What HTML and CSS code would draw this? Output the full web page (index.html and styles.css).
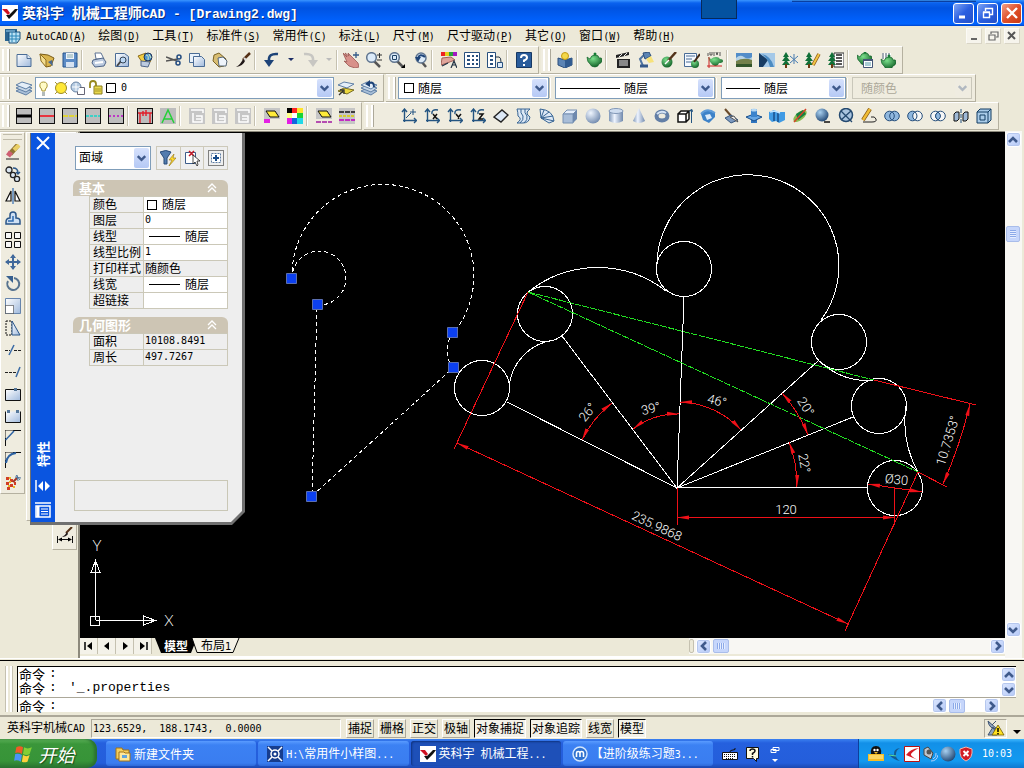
FILE: index.html
```html
<!DOCTYPE html>
<html lang="zh-CN">
<head>
<meta charset="utf-8">
<title>英科宇 机械工程师CAD - [Drawing2.dwg]</title>
<link rel="stylesheet" href="styles.css">
</head>
<body>
<svg class="defs" aria-hidden="true">
<defs>
<linearGradient id="blue" x1="0" y1="0" x2="1" y2="1"><stop offset="0" stop-color="#fff"/><stop offset="1" stop-color="#9fb9dc"/></linearGradient>
<linearGradient id="steel" x1="0" y1="0" x2="1" y2="0"><stop offset="0" stop-color="#7f97b8"/><stop offset=".4" stop-color="#eef4ff"/><stop offset="1" stop-color="#6f88ac"/></linearGradient>
<radialGradient id="ball" cx=".35" cy=".3" r=".8"><stop offset="0" stop-color="#f0f6ff"/><stop offset="1" stop-color="#6882a8"/></radialGradient>
<radialGradient id="dball" cx=".35" cy=".3" r=".8"><stop offset="0" stop-color="#a8d0f0"/><stop offset="1" stop-color="#173d6b"/></radialGradient>
<radialGradient id="green" cx=".4" cy=".3" r=".8"><stop offset="0" stop-color="#7be08c"/><stop offset="1" stop-color="#06521c"/></radialGradient>
<symbol id="page" viewBox="0 0 16 16"><path d="M1 2.500h10l4 4v8H1z" fill="url(#blue)" stroke="#4a6c96"/><path d="M11 2.500v4h4" fill="#dfe9f7" stroke="#4a6c96"/></symbol>
<symbol id="teapot" viewBox="0 0 16 16"><path d="M1 5l3 2q1-4 5-4t4 3q3-1 3 2t-3 4q-1 3-4 3-4 0-5-3Q1 10 1 5z" fill="url(#green)" stroke="#0a5a22" stroke-width=".6"/><circle cx="9" cy="2" r="1.500" fill="#157a35"/></symbol>
<symbol id="tree" viewBox="0 0 16 16"><path d="M5 0L2 5h2L1 9h3l-3 4h8L6 9h3L6 5h2z" fill="#107038"/><path d="M5 12v4" stroke="#6b3b12" stroke-width="2"/></symbol>
<symbol id="layers" viewBox="0 0 16 16"><path d="M0 11l6-3 10 3-6 4z" fill="#a9bfd8" stroke="#5f7fa5"/><path d="M0 8l6-3 10 3-6 4z" fill="#c7d7e8" stroke="#5f7fa5"/><path d="M0 5l6-3 10 3-6 4z" fill="#e4eef8" stroke="#5f7fa5"/></symbol>
<symbol id="lens" viewBox="0 0 16 16"><path d="M8 9l6 6" stroke="#555" stroke-width="2.500"/><circle cx="5.500" cy="5.500" r="4.800" fill="#dcebf9" stroke="#60758f" stroke-width="1.500"/></symbol>
<symbol id="axes" viewBox="0 0 16 16"><path d="M3.500 14V2M2 12.500h13M1 4l2.500-3L6 4M13 10l2.500 2.500L13 15" fill="none" stroke="#245582" stroke-width="1.400"/></symbol>
<symbol id="brush" viewBox="0 0 16 16"><path d="M15 1L8 8" stroke="#553016" stroke-width="2.500"/><path d="M8 7l2 2q-2 5-9 6 5-3 7-8z" fill="#201818"/><path d="M9 6l2 2" stroke="#ddd" stroke-width="2"/></symbol>
<symbol id="chev" viewBox="0 0 16 16"><path d="M4 6l4 4 4-4" fill="none" stroke="#3f5a8c" stroke-width="2.600"/></symbol>
<symbol id="ltype" viewBox="0 0 16 16"><rect x=".5" y=".5" width="15" height="15" fill="#bdbdbd" stroke="#111"/></symbol>
<symbol id="logo" viewBox="0 0 16 16"><path d="M0 0h16v16H0z" fill="#fff"/><path d="M0 4h5l3 4-2 2z" fill="#d01020"/><path d="M4 10l3 0 6-6h3l-3 4-6 6z" fill="#111"/></symbol>
<marker id="arr" viewBox="0 0 12 6" refX="12" refY="3" markerWidth="12" markerHeight="6" markerUnits="userSpaceOnUse" orient="auto-start-reverse"><path d="M0 1l12 2-12 2z" fill="#f01018"/></marker>
</defs>
</svg>
<div class="app">
<header class="titlebar">
  <svg class="i16"><use href="#logo"/></svg>
  <h1>英科宇<span class="t"> </span>机械工程师<span class="t">CAD - [Drawing2.dwg]</span></h1>
  <span class="overlay-chip"></span><span class="overlay-edge"></span>
  <div class="winbtns">
    <button aria-label="最小化"><svg viewBox="0 0 18 18"><path d="M4 13h6" stroke="#fff" stroke-width="3"/></svg></button>
    <button aria-label="还原"><svg viewBox="0 0 18 18"><path d="M6.500 7V4.500h7v6H11M4.500 8.500h6v5h-6zM6 4.500h8M4 8h7" fill="none" stroke="#fff" stroke-width="1.400"/></svg></button>
    <button class="close" aria-label="关闭"><svg viewBox="0 0 18 18"><path d="M4 4l10 10M14 4L4 14" stroke="#fff" stroke-width="2.400"/></svg></button>
  </div>
</header>
<nav class="menubar">
  <svg class="i16" viewBox="0 0 16 16"><path d="M0 1h12v12H0z" fill="#2a6590"/><path d="M4 4h11v7l-3 4H4z" fill="#bde3f5" stroke="#174d78"/><path d="M7 4v10M11 4v10M4 8h11M4 11h11" stroke="#2b86b8"/><path d="M1 3h9" stroke="#9dd4f0"/></svg>
  <a href="#m1"><span class="l">AutoCAD(<u>A</u>)</span></a>
  <a href="#m2">绘图<span class="l">(<u>D</u>)</span></a>
  <a href="#m3">工具<span class="l">(<u>T</u>)</span></a>
  <a href="#m4">标准件<span class="l">(<u>S</u>)</span></a>
  <a href="#m5">常用件<span class="l">(<u>C</u>)</span></a>
  <a href="#m6">标注<span class="l">(<u>L</u>)</span></a>
  <a href="#m7">尺寸<span class="l">(<u>M</u>)</span></a>
  <a href="#m8">尺寸驱动<span class="l">(<u>P</u>)</span></a>
  <a href="#m9">其它<span class="l">(<u>O</u>)</span></a>
  <a href="#m10">窗口<span class="l">(<u>W</u>)</span></a>
  <a href="#m11">帮助<span class="l">(<u>H</u>)</span></a>
  <div class="docbtns">
    <button aria-label="最小化文档"><svg viewBox="0 0 12 12"><path d="M3 9h6" stroke="#666" stroke-width="2"/></svg></button>
    <button aria-label="还原文档"><svg viewBox="0 0 12 12"><path d="M4 4V2h7v5H9M2 5h6v5H2zM4 2h7M2 5h6" fill="none" stroke="#666" stroke-width="1.200"/></svg></button>
    <button aria-label="关闭文档"><svg viewBox="0 0 12 12"><path d="M2 2l7 7M9 2L2 9" stroke="#555" stroke-width="2"/></svg></button>
  </div>
</nav>

<div class="row">
 <div class="bar">
  <i class="grip"></i>
  <button class="tb" aria-label="新建"><svg><use href="#page"/></svg></button>
  <button class="tb" aria-label="打开"><svg viewBox="0 0 16 16"><path d="M1 2l8 1 6 3-3 8-5 1z" fill="#d9b44c" stroke="#7a5c16"/><path d="M1 2l6 6v7L2 9z" fill="#f3dd8f" stroke="#8d6d20"/><path d="M9 10l5 4-1-6z" fill="#4a6a90"/></svg></button>
  <button class="tb" aria-label="保存"><svg viewBox="0 0 16 16"><path d="M1 1h14v14H1z" fill="#5b8bc5" stroke="#27548c"/><path d="M4 1h8v6H4z" fill="#eef4fb"/><path d="M4 10h8v5H4z" fill="#d5e2f1"/><path d="M5 3h6M5 5h6" stroke="#8aa"/></svg></button>
  <i class="sep"></i>
  <button class="tb" aria-label="打印"><svg viewBox="0 0 16 16"><path d="M4 1h6l3 6H5z" fill="#fff" stroke="#5d7293"/><path d="M2 8l10-2 3 4-2 4-9 1-3-4z" fill="#bccbe0" stroke="#4f6588"/><path d="M4 11l8-1" stroke="#fff" stroke-width="2"/></svg></button>
  <button class="tb" aria-label="打印预览"><svg viewBox="0 0 16 16"><path d="M1.500 1.500h9l4 3v10h-13z" fill="url(#blue)" stroke="#4a6c96"/><path d="M7 9l-4 5" stroke="#444" stroke-width="2"/><circle cx="9" cy="8" r="3" fill="#bcd8f5" stroke="#345"/></svg></button>
  <button class="tb" aria-label="发布"><svg viewBox="0 0 16 16"><path d="M1 4l8-3 5 8-7 4z" fill="#f2cf45" stroke="#8e6e1c"/><circle cx="11" cy="5" r="4" fill="#4d94cf" stroke="#235"/><path d="M9 3q3 0 2 5M12 2l2 4" stroke="#d8f0c0" fill="none"/><path d="M4 9l9 1-2 5-7-1z" fill="#bccbe0" stroke="#4f6588"/></svg></button>
  <i class="sep"></i>
  <button class="tb" aria-label="剪切"><svg viewBox="0 0 16 16"><path d="M0 5l11 4M0 9l12-2" stroke="#555" stroke-width="1.500"/><circle cx="13" cy="5" r="2" fill="none" stroke="#234c80" stroke-width="1.500"/><circle cx="12" cy="11" r="2" fill="none" stroke="#234c80" stroke-width="1.500"/></svg></button>
  <button class="tb" aria-label="复制"><svg viewBox="0 0 16 16"><path d="M.5 1.500h10v9H.5z" fill="#e9f2fb" stroke="#4a6c96"/><path d="M4.500 4.500h8l3 3v7h-11z" fill="url(#blue)" stroke="#4a6c96"/></svg></button>
  <button class="tb" aria-label="粘贴"><svg viewBox="0 0 16 16"><path d="M2 3l5-2 7 6-2 7-5 1-6-6z" fill="#d8bd72" stroke="#7c6425"/><path d="M6 6l5-1 4 4-1 5H7z" fill="#eef4fb" stroke="#567"/></svg></button>
  <button class="tb" aria-label="特性匹配"><svg><use href="#brush"/></svg></button>
  <i class="sep"></i>
  <button class="tb" aria-label="放弃"><svg viewBox="0 0 16 16"><path d="M14 2Q4 1 5 9" fill="none" stroke="#1d4378" stroke-width="2.500"/><path d="M0 8h10l-5 7z" fill="#1d4378"/></svg></button>
  <button class="tb drop" aria-label="放弃列表"><svg viewBox="0 0 6 16"><path d="M0 6h6L3 9z" fill="#1c2d66"/></svg></button>
  <button class="tb" aria-label="重做"><svg viewBox="0 0 16 16"><path d="M2 2q10-1 9 7" fill="none" stroke="#c7c6c2" stroke-width="2.500"/><path d="M6 8h10l-5 7z" fill="#c7c6c2"/></svg></button>
  <button class="tb drop" aria-label="重做列表"><svg viewBox="0 0 6 16"><path d="M0 6h6L3 9z" fill="#bbb"/></svg></button>
  <i class="sep tight"></i>
  <button class="tb" aria-label="平移"><svg viewBox="0 0 16 16"><path d="M0 1l4 4-2-4 4 3-1-3 5 5 5 5 1 4-4 1-6-2-5-5 3 1z" fill="#d8918a" stroke="#9a5550" stroke-width=".8"/><path d="M13 0v6M10 3h6" stroke="#345a88" stroke-width="1.300"/></svg></button>
  <button class="tb" aria-label="缩放"><svg viewBox="0 0 16 16"><use href="#lens"/><path d="M11 3h5M13.500 1v5M11 8h5" stroke="#333"/></svg></button>
  <button class="tb" aria-label="窗口缩放"><svg viewBox="0 0 16 16"><use href="#lens"/><path d="M3.500 3.500h4v4h-4z" fill="none" stroke="#246"/><path d="M16 12v4h-4z"/></svg></button>
  <button class="tb" aria-label="缩放上一个"><svg viewBox="0 0 16 16"><path d="M9 9l5 6" stroke="#555" stroke-width="2.500"/><circle cx="9" cy="6" r="5" fill="#dcebf9" stroke="#60758f" stroke-width="1.500"/><path d="M13 5Q8 1 6 6" fill="none" stroke="#1d4378" stroke-width="2"/><path d="M3 5h6l-3 5z" fill="#1d4378"/></svg></button>
  <i class="sep"></i>
  <button class="tb" aria-label="特性"><svg viewBox="0 0 16 16"><path d="M0 0h5v4H0z" fill="#e22"/><path d="M4 0h4v4H4z" fill="#e5d21c"/><path d="M8 0h4v4H8z" fill="#2aa43a"/><path d="M12 0h4v4h-4z" fill="#a31ac2"/><path d="M1 6l9-1 4 3-8 3-6 2z" fill="#e0a59b" stroke="#a26259"/><path d="M1 14l6-3M10 16l3-7 3 7M11 13h4" fill="none" stroke="#234" stroke-width="1.200"/></svg></button>
  <button class="tb" aria-label="设计中心"><svg viewBox="0 0 16 16"><path d="M.5.5h15v15H.5z" fill="#fff" stroke="#28507e"/><path d="M3 3h3v2H3zM3 7h3v2H3zM3 11h3v2H3zM8 3h2v2H8zM12 3h2v2h-2zM8 7h2v2H8zM12 7h2v2h-2zM8 11h2v2H8zM12 11h2v2h-2z" fill="#28507e"/></svg></button>
  <button class="tb" aria-label="工具选项板"><svg viewBox="0 0 16 16"><path d="M.5.5h8v15h-8z" fill="#fff" stroke="#28507e"/><path d="M3 3h3v2H3zM3 7h3v2H3zM3 11h3v2H3z" fill="#28507e"/><path d="M8 5h4q2 0 2 5" fill="none" stroke="#234"/><path d="M10.500 10.500h5v5h-5z" fill="#dcebf9" stroke="#28507e"/></svg></button>
  <i class="sep"></i>
  <button class="tb" aria-label="帮助"><svg viewBox="0 0 16 16"><path d="M.5.5h15v15H.5z" fill="#295c9b" stroke="#163863"/><path d="M5 6q0-3 3-3t3 2.500q0 2-3 3V10M8 12v2" fill="none" stroke="#fff" stroke-width="2"/></svg></button>
 </div>
 <div class="bar">
  <i class="grip"></i>
  <button class="tb" aria-label="隐藏"><svg viewBox="0 0 16 16"><path d="M1 6l7 2 7-2v7l-7 3-7-3z" fill="#5b84b4" stroke="#2c4f7c"/><path d="M8 8v8l7-3V6z" fill="#305b90"/><circle cx="8" cy="4" r="3.500" fill="#f3d84a" stroke="#c39a12"/></svg></button>
  <i class="sep"></i>
  <button class="tb" aria-label="渲染"><svg><use href="#teapot"/></svg></button>
  <i class="sep"></i>
  <button class="tb" aria-label="场景"><svg viewBox="0 0 16 16"><path d="M1 3l13-3v3L1 6zM2 7h13v9H2z" fill="#222"/><path d="M4 5l3-3M9 4l3-3M4 9h9M4 11h9M4 13h9" stroke="#eee"/></svg></button>
  <button class="tb" aria-label="光源"><svg viewBox="0 0 16 16"><path d="M5 14L2 7l5-5" fill="none" stroke="#4f74a2" stroke-width="2"/><path d="M2 14h8" stroke="#35598a" stroke-width="3"/><path d="M5 1l6-1 2 4-6 3z" fill="#5b84b4" stroke="#2c4f7c"/><path d="M8 7l5-3 3 6-5 1z" fill="#f7e27a"/></svg></button>
  <button class="tb" aria-label="材质"><svg viewBox="0 0 16 16"><circle cx="6" cy="10" r="5.500" fill="url(#green)"/><path d="M15 0L7 9" stroke="#53341b" stroke-width="2.500"/><path d="M8 8l-4 4" stroke="#fff" stroke-width="1.500"/></svg></button>
  <button class="tb" aria-label="材质库"><svg viewBox="0 0 16 16"><path d="M.5 1.500h12v13H.5z" fill="#f5f9ff" stroke="#4a6c96"/><path d="M2 4h9M2 7h6M2 10h6" stroke="#4a6c96"/><circle cx="11" cy="12" r="4" fill="url(#green)"/><path d="M16 2l-6 8" stroke="#442a18" stroke-width="2"/></svg></button>
  <button class="tb" aria-label="贴图"><svg viewBox="0 0 16 16"><path d="M1 5l3 2q2-2 5-2t4 2q3 0 3 2t-4 2q-1 3-4 3-3-1-4-3-2-2-3-6z" fill="url(#green)"/><path d="M2 5v11M0 14h15" stroke="#c22"/><path d="M1 1v3M3 0v3h2V0M7 0v4M9 0l1 3 1-3M13 0v4" stroke="#333" fill="none" stroke-width=".8"/></svg></button>
  <i class="sep"></i>
  <button class="tb" aria-label="背景"><svg viewBox="0 0 16 16"><path d="M0 1h16v14H0z" fill="#528dc9"/><path d="M0 6q4-4 8-1t8 0v4H0z" fill="#b8d3e5"/><path d="M0 9q8-4 16-1v7H0z" fill="#73804b"/><path d="M0 12h16v3H0z" fill="#33552b"/></svg></button>
  <button class="tb" aria-label="雾化"><svg viewBox="0 0 16 16"><path d="M0 1h16v14H0z" fill="#a5c9e8"/><path d="M0 1l9 7-5 7H0z" fill="#173c63"/><path d="M3 2q9 2 12 13h-4Q9 7 3 2z" fill="#4c8cc2"/></svg></button>
  <button class="tb" aria-label="新建配景"><svg viewBox="0 0 16 16"><use href="#tree" x="-1"/><path d="M12 2v10M8 4l8 7M16 4l-8 7" stroke="#477bb0"/></svg></button>
  <button class="tb" aria-label="编辑配景"><svg viewBox="0 0 16 16"><use href="#tree" x="-1"/><path d="M14 2L8 13" stroke="#8a5614" stroke-width="3.500"/><path d="M14 2L8 13" stroke="#f2c645" stroke-width="2"/></svg></button>
  <button class="tb" aria-label="配景库"><svg viewBox="0 0 16 16"><path d="M6 1h10v14H6z" fill="#fff" stroke="#333"/><path d="M8 3h6M8 6h6M8 9h6M8 12h6" stroke="#222" stroke-width="1.500"/><use href="#tree" x="-1"/></svg></button>
  <i class="sep"></i>
  <button class="tb" aria-label="渲染系统配置"><svg viewBox="0 0 16 16"><use href="#teapot" x="-1" y="-2"/><path d="M6.500 7.500h9v8h-9z" fill="#fff" stroke="#457"/><path d="M6 8h10" stroke="#457" stroke-width="2"/><path d="M8 11h6M8 13h6" stroke="#59a"/></svg></button>
  <button class="tb" aria-label="统计信息"><svg viewBox="0 0 16 16"><path d="M2 1h9v6H2z" fill="#fff"/><path d="M2 2h9M2 4h9M2 6h9" stroke="#456" stroke-dasharray="2 1"/><use href="#teapot" y="2"/></svg></button>
 </div>
</div>

<div class="row">
 <div class="bar">
  <i class="grip"></i>
  <button class="tb" aria-label="图层特性"><svg><use href="#layers"/></svg></button>
  <div class="combo layer">
   <svg class="state" viewBox="0 0 80 16"><path d="M5 11q0-2-2-4Q2 2 6.500 2T10 7q-2 2-2 4z" fill="#fffbc7" stroke="#a79532"/><path d="M5 13h3M5 15h3" stroke="#677"/><circle cx="24" cy="8" r="5.500" fill="#ffe836" stroke="#9c8b25"/><path d="M18 2l2 2M30 2l-2 2M18 14l2-2M30 14l-2-2" stroke="#a79532"/><circle cx="39" cy="7" r="5" fill="#b5cbe2" stroke="#6d87a6"/><path d="M39 3v8M35 7h8" stroke="#fff"/><path d="M42.500 7.500h5v7h-7v-3" fill="#fff" stroke="#667"/><path d="M53 8V4q0-3 3-3t3 3v3" fill="none" stroke="#97881f" stroke-width="1.800"/><path d="M57 6h8v8h-8z" fill="#e9d94d" stroke="#8b7e20"/><path d="M58 9h6M58 11h6" stroke="#a7982e"/><path d="M69.500 3.500h9v9h-9z" fill="#fff" stroke="#000"/></svg>
   <select class="mono" aria-label="图层"><option>0</option></select><svg class="arrow"><use href="#chev"/></svg>
  </div>
  <button class="tb" aria-label="置为当前"><svg viewBox="0 0 16 16"><path d="M0 11l6-3 10 2-7 4z" fill="#edd83f" stroke="#756b21"/><path d="M0 5l6-3 10 2-7 4z" fill="#e4eef8" stroke="#5f7fa5"/><path d="M1 15l4-4M2 10h4v4" fill="none" stroke="#333" stroke-width="1.300"/></svg></button>
  <button class="tb" aria-label="上一个图层"><svg viewBox="0 0 16 16"><use href="#layers"/><path d="M13 7Q13 1 8 3" fill="none" stroke="#1d4378" stroke-width="2"/><path d="M4 4l5-4v7z" fill="#1d4378"/></svg></button>
 </div>
 <div class="bar props">
  <i class="grip"></i>
  <div class="combo color"><i class="swatch"></i><select aria-label="颜色"><option>随层</option></select><svg class="arrow"><use href="#chev"/></svg></div>
  <i class="sep"></i>
  <div class="combo ltype"><i class="rule"></i><select aria-label="线型"><option>随层</option></select><svg class="arrow"><use href="#chev"/></svg></div>
  <i class="sep"></i>
  <div class="combo lweight"><i class="rule"></i><select aria-label="线宽"><option>随层</option></select><svg class="arrow"><use href="#chev"/></svg></div>
  <i class="sep"></i>
  <div class="combo pstyle off"><select aria-label="打印样式" disabled><option>随颜色</option></select><svg class="arrow"><use href="#chev"/></svg></div>
 </div>
</div>

<div class="row">
 <div class="bar">
  <i class="grip"></i>
  <button class="tb" aria-label="粗实线"><svg viewBox="0 0 16 16"><use href="#ltype"/><path d="M1 8h14" stroke="#000" stroke-width="3"/></svg></button>
  <button class="tb" aria-label="细实线"><svg viewBox="0 0 16 16"><use href="#ltype"/><path d="M1 8h14" stroke="#e8353f" stroke-width="2"/></svg></button>
  <button class="tb" aria-label="中心线"><svg viewBox="0 0 16 16"><use href="#ltype"/><path d="M1 8h14" stroke="#ded33a" stroke-width="2" stroke-dasharray="5 1"/></svg></button>
  <button class="tb" aria-label="虚线"><svg viewBox="0 0 16 16"><use href="#ltype"/><path d="M1 8h14" stroke="#3ed0c6" stroke-width="2" stroke-dasharray="3 1"/></svg></button>
  <button class="tb" aria-label="双点画线"><svg viewBox="0 0 16 16"><use href="#ltype"/><path d="M1 8h14" stroke="#bd38c4" stroke-width="2" stroke-dasharray="2 2"/></svg></button>
  <i class="sep"></i>
  <button class="tb" aria-label="尺寸层"><svg viewBox="0 0 16 16"><use href="#ltype"/><path d="M3 15V5h10v10M6 8V3M9 8V2M1 5h3M12 5h3" fill="none" stroke="#e01d28" stroke-width="1.400"/></svg></button>
  <button class="tb" aria-label="文字层"><svg viewBox="0 0 16 16"><path d="M0 0h16v16H0z" fill="#bdbdbd"/><path d="M2 15L8 2l6 13M4 11h8" fill="none" stroke="#25cf38" stroke-width="1.500"/></svg></button>
  <i class="sep"></i>
  <button class="tb" aria-label="图层一"><svg viewBox="0 0 16 16"><path d="M0 0h16v16H0z" fill="#c6c6c6"/><path d="M2 2h12v3M4 5v9h9V8H7M7 11h5" fill="none" stroke="#fff" stroke-width="1.500"/></svg></button>
  <button class="tb" aria-label="图层二"><svg viewBox="0 0 16 16"><path d="M0 0h16v16H0z" fill="#c6c6c6"/><path d="M2 2h12v3M4 5v9h9V8H7M7 11h5" fill="none" stroke="#fff" stroke-width="1.500"/></svg></button>
  <button class="tb" aria-label="图层三"><svg viewBox="0 0 16 16"><path d="M0 0h16v16H0z" fill="#c6c6c6"/><path d="M2 2h12v3M4 5v9h9V8H7M7 11h5" fill="none" stroke="#fff" stroke-width="1.500"/></svg></button>
  <i class="sep"></i>
  <button class="tb" aria-label="改图层"><svg viewBox="0 0 16 16"><path d="M0 0h16v11H0z" fill="#c6c6c6"/><path d="M2 3h9l4 6H6z" fill="#ffeb3a" stroke="#111"/><path d="M0 11h6v4H0z" fill="#e422e4"/></svg></button>
  <button class="tb" aria-label="改颜色"><svg viewBox="0 0 16 16"><path d="M0 0h5v5H0z" fill="#000"/><path d="M5 0h5v5H5z" fill="#f22"/><path d="M10 0h6v5h-6z" fill="#ffe32b"/><path d="M0 5h5v5H0z" fill="#ff8"/><path d="M5 5h5v5H5z" fill="#fff"/><path d="M10 5h6v5h-6z" fill="#1bd335"/><path d="M0 10h5v6H0z" fill="#e31ee3"/><path d="M5 10h5v6H5z" fill="#16d"/><path d="M10 10h6v6h-6z" fill="#20d8e8"/></svg></button>
  <i class="sep"></i>
  <button class="tb" aria-label="层线型"><svg viewBox="0 0 16 16"><path d="M0 0h16v11H0z" fill="#c6c6c6"/><path d="M2 3h9l4 6H6z" fill="#ffeb3a" stroke="#111"/><path d="M0 14h16" stroke="#a31aa3" stroke-width="1.500" stroke-dasharray="5 1"/></svg></button>
  <button class="tb" aria-label="改线型"><svg viewBox="0 0 16 16"><path d="M0 0h16v16H0z" fill="#c6c6c6"/><path d="M0 4h16" stroke="#111" stroke-width="1.500" stroke-dasharray="5 1"/><path d="M0 8h16" stroke="#d8cc2e" stroke-width="2" stroke-dasharray="3 1"/><path d="M0 12h16" stroke="#c32cc3" stroke-width="2" stroke-dasharray="5 1"/></svg></button>
 </div>
 <div class="bar solids">
  <i class="grip"></i>
  <button class="tb" aria-label="UCS 原点"><svg viewBox="0 0 16 16"><use href="#axes"/><path d="M5 10l5-5M12 1v6M9 4h6" stroke="#245582"/></svg></button>
  <button class="tb" aria-label="绕 X 轴"><svg viewBox="0 0 16 16"><use href="#axes"/><path d="M14 2Q7 1 8 6" fill="none" stroke="#245582" stroke-width="1.500"/><path d="M9 6l4 5M13 6l-4 5" stroke="#111" stroke-width="1.500"/></svg></button>
  <button class="tb" aria-label="绕 Y 轴"><svg viewBox="0 0 16 16"><use href="#axes"/><path d="M14 2Q7 1 8 6" fill="none" stroke="#245582" stroke-width="1.500"/><path d="M9 6l2.500 3L14 6M11.500 8v3" fill="none" stroke="#111" stroke-width="1.500"/></svg></button>
  <button class="tb" aria-label="绕 Z 轴"><svg viewBox="0 0 16 16"><use href="#axes"/><path d="M14 2Q7 1 8 6" fill="none" stroke="#245582" stroke-width="1.500"/><path d="M9 6h4l-4 5h4" fill="none" stroke="#111" stroke-width="1.500"/></svg></button>
  <button class="tb" aria-label="面"><svg viewBox="0 0 16 16"><path d="M1 9l8-7 6 5-7 7z" fill="#dce8f5" stroke="#222" stroke-width="1.400"/></svg></button>
  <button class="tb" aria-label="直纹曲面"><svg viewBox="0 0 16 16"><path d="M1 1h13q-6 4 0 8-1 6-7 6H1q6-4 1-7 0-4-1-7z" fill="#dce8f5" stroke="#386594"/><path d="M5 1q-1 4 2 7 1 4-3 7M9 1q-1 4 2 7 1 4-3 7" fill="none" stroke="#386594"/></svg></button>
  <button class="tb" aria-label="边界曲面"><svg viewBox="0 0 16 16"><path d="M1 1q13 1 14 12l-5 2-8-5z" fill="#dce8f5" stroke="#386594"/><path d="M2 10l3-8M2 10l8-6M2 10l12-2M2 10l13 3" stroke="#386594"/></svg></button>
  <button class="tb" aria-label="长方体"><svg viewBox="0 0 16 16"><path d="M1 6l4-4h10l-4 4z" fill="#e5eefb" stroke="#7790b2"/><path d="M1 6h10v9H1z" fill="#a8bdd8" stroke="#7790b2"/><path d="M11 6l4-4v9l-4 4z" fill="#6e89ae"/></svg></button>
  <button class="tb" aria-label="球体"><svg viewBox="0 0 16 16"><circle cx="8" cy="8" r="7.500" fill="url(#ball)"/></svg></button>
  <button class="tb" aria-label="圆柱体"><svg viewBox="0 0 16 16"><path d="M1 3v10q7 4 14 0V3z" fill="url(#steel)"/><ellipse cx="8" cy="3" rx="7" ry="2.500" fill="#cfddf0" stroke="#8298b8"/></svg></button>
  <button class="tb" aria-label="圆锥体"><svg viewBox="0 0 16 16"><path d="M8 0L2 13q6 4 12 0z" fill="url(#steel)"/></svg></button>
  <button class="tb" aria-label="圆环体"><svg viewBox="0 0 16 16"><ellipse cx="8" cy="8" rx="5.500" ry="4.500" fill="none" stroke="#637fa6" stroke-width="4"/><path d="M3 6q4-4 9-1" fill="none" stroke="#d5e4f6" stroke-width="2"/></svg></button>
  <button class="tb" aria-label="拉伸"><svg viewBox="0 0 16 16"><path d="M1 6h8v8H1zM1 6l3-3h8L9 6M12 3v8l-3 3" fill="#fff" stroke="#111" stroke-width="1.500"/><path d="M14.500 15V2M12.500 4l2-3 1.500 3" stroke="#245582" fill="none"/></svg></button>
  <button class="tb" aria-label="旋转实体"><svg viewBox="0 0 16 16"><path d="M1 6l6-4 8 3v4l-6 6-6-3z" fill="#3d82c8"/><path d="M5 7l5-1 2 4-5 2z" fill="#dcebfa"/><path d="M1 6q6-7 14-1" fill="none" stroke="#5f9bd8" stroke-width="2"/></svg></button>
  <button class="tb" aria-label="剖切"><svg viewBox="0 0 16 16"><path d="M2 1l7 8" stroke="#6a4b2b" stroke-width="2"/><path d="M2 10l6-3 7 5-7 3z" fill="#7d9abf" stroke="#36567e"/><path d="M7 9l4-1 4 6z" fill="#eee" stroke="#555"/></svg></button>
  <button class="tb" aria-label="切割"><svg viewBox="0 0 16 16"><path d="M5 1h6v14H5z" fill="#3277c0"/><path d="M0 9l8-3 8 3-8 4z" fill="#65a6e4" stroke="#194e8a"/><path d="M5 2h6v7H5z" fill="#3c84cc"/><ellipse cx="8" cy="2" rx="3" ry="1.500" fill="#b5d8f4"/></svg></button>
  <button class="tb" aria-label="干涉"><svg viewBox="0 0 16 16"><path d="M0 4l5-2 4 2 7 0v8l-6 3-3-2-4 1-3-3z" fill="#409be4"/><path d="M5 3v10M9 5v9" stroke="#174f8a" stroke-width="1.500"/><path d="M1 4l5-1 5 2" stroke="#c0e4ff" stroke-width="1.500" fill="none"/></svg></button>
  <button class="tb" aria-label="三维旋转"><svg viewBox="0 0 16 16"><ellipse cx="8" cy="8" rx="8" ry="4" transform="rotate(-40 8 8)" fill="#88bd53"/><path d="M4 6l7-4 3 4-8 6z" fill="#158142"/><path d="M2 14L14 1" stroke="#d6432a" stroke-width="1.500"/></svg></button>
  <button class="tb" aria-label="着色"><svg viewBox="0 0 16 16"><circle cx="7" cy="7" r="6.500" fill="url(#dball)"/><path d="M9 14h6" stroke="#111" stroke-width="1.500"/></svg></button>
  <button class="tb" aria-label="消隐"><svg viewBox="0 0 16 16"><circle cx="8" cy="7" r="6.500" fill="#a9c4df" stroke="#24496f" stroke-width="1.500"/><path d="M3 3l11 11M13 3L3 12" stroke="#24496f" stroke-width="1.300"/></svg></button>
  <button class="tb" aria-label="编辑实体"><svg viewBox="0 0 16 16"><path d="M9 1L2 12" stroke="#81520d" stroke-width="4"/><path d="M9 1L2 12" stroke="#f0bd35" stroke-width="2.500"/><path d="M2 14h9q5 0 4-3-1-3-5-2" fill="none" stroke="#222"/></svg></button>
  <button class="tb" aria-label="并集"><svg viewBox="0 0 16 16"><circle cx="5.500" cy="8" r="4.800" fill="#8fb7de"/><circle cx="10.500" cy="8" r="4.800" fill="#8fb7de"/><g fill="none" stroke="#264e7a"><circle cx="5.500" cy="8" r="4.800"/><circle cx="10.500" cy="8" r="4.800"/></g></svg></button>
  <button class="tb" aria-label="差集"><svg viewBox="0 0 16 16"><circle cx="5.500" cy="8" r="4.800" fill="#8fb7de" stroke="#264e7a"/><circle cx="10.500" cy="8" r="4.800" fill="#f6f6f6" stroke="#264e7a"/><path d="M8 4q4 4 0 8" fill="none" stroke="#264e7a"/></svg></button>
  <button class="tb" aria-label="交集"><svg viewBox="0 0 16 16"><g fill="#f6f6f6" stroke="#264e7a"><circle cx="5.500" cy="8" r="4.800"/><circle cx="10.500" cy="8" r="4.800"/></g><path d="M8 4q5 4 0 8-5-4 0-8z" fill="#8fb7de" stroke="#264e7a"/></svg></button>
  <button class="tb" aria-label="三维镜像"><svg viewBox="0 0 16 16"><path d="M1 6l2-2h3v7l-2 2H1zM10 6l2-2h3v7l-2 2h-3z" fill="#9fb9d6" stroke="#111"/><path d="M8 1v15" stroke="#245582" stroke-dasharray="4 1"/></svg></button>
  <button class="tb" aria-label="抽壳"><svg viewBox="0 0 16 16"><path d="M1 4l3-3h11v11l-3 3H1z" fill="#a9cbe8" stroke="#123c62"/><path d="M1 4h11v11M12 4l3-3M4 7h5v5H4z" fill="none" stroke="#123c62"/></svg></button>
 </div>
</div>

<main class="work">
 <aside class="dock">
  <div class="vbar first">
   <i class="vgrip"></i>
   <button class="vb" aria-label="删除"><svg viewBox="0 0 16 16"><path d="M1 15h13" stroke="#222"/><path d="M13 1L5 10" stroke="#8f7435" stroke-width="5"/><path d="M14 1L9 6" stroke="#e9cf65" stroke-width="4"/><path d="M6 8l-3 4" stroke="#cf5f73" stroke-width="5"/></svg></button>
   <button class="vb" aria-label="复制对象"><svg viewBox="0 0 16 16"><g fill="#d9e5f1" stroke="#222" stroke-width="1.300"><circle cx="4" cy="4" r="3"/><circle cx="8" cy="9" r="2.600"/><circle cx="12" cy="13" r="2.600"/></g><path d="M8 2q5 0 5 5M11 6l2 2 2-2" fill="none" stroke="#2b5689" stroke-width="1.400"/></svg></button>
   <button class="vb" aria-label="镜像"><svg viewBox="0 0 16 16"><path d="M6 3v10H1zM10 3v10h5z" fill="#fff" stroke="#111" stroke-width="1.200"/><path d="M8 0v16" stroke="#2d6ab1" stroke-width="1.200"/></svg></button>
   <button class="vb" aria-label="偏移"><svg viewBox="0 0 16 16"><path d="M1 14h14v-3q0-3-4-3V5q0-3-3-3T5 5v3q-4 0-4 4z" fill="#cfe0f3" stroke="#2b5689" stroke-width="1.500"/><path d="M3 11h5V6" fill="none" stroke="#2d6ab1" stroke-width="1.500"/></svg></button>
   <button class="vb" aria-label="阵列"><svg viewBox="0 0 16 16"><path d="M.500.500h6v6h-6zM9.500.500h6v6h-6zM.500 9.500h6v6h-6zM9.500 9.500h6v6h-6z" fill="#f7f7f7" stroke="#111"/></svg></button>
   <button class="vb" aria-label="移动"><svg viewBox="0 0 16 16"><path d="M8 1v14M1 8h14" stroke="#41699b" stroke-width="2"/><path d="M8 0l3 4H5zM8 16l3-4H5zM0 8l4-3v6zM16 8l-4-3v6z" fill="#41699b"/></svg></button>
   <button class="vb" aria-label="旋转"><svg viewBox="0 0 16 16"><path d="M3 5a6 6 0 1 0 6-3" fill="none" stroke="#587490" stroke-width="2"/><path d="M1 0h7v7z" fill="#37608f"/></svg></button>
   <button class="vb" aria-label="缩放对象"><svg viewBox="0 0 16 16"><path d="M.5.5h15v15H.5z" fill="url(#blue)" stroke="#6685ad"/><path d="M.5 7.500h8v8h-8z" fill="#fff" stroke="#222" stroke-dasharray="1 1"/></svg></button>
   <button class="vb" aria-label="拉伸对象"><svg viewBox="0 0 16 16"><path d="M1 1h6v14H1z" fill="none" stroke="#111" stroke-dasharray="2 1"/><path d="M7 1l8 14H7z" fill="url(#blue)" stroke="#2b5689"/></svg></button>
   <button class="vb" aria-label="修剪"><svg viewBox="0 0 16 16"><path d="M0 8.500h5M9 8.500h7" stroke="#222" stroke-dasharray="3 1"/><path d="M4 13l5-10" stroke="#3b6ba5" stroke-width="1.500"/></svg></button>
   <button class="vb" aria-label="延伸"><svg viewBox="0 0 16 16"><path d="M0 8.500h11" stroke="#222" stroke-dasharray="3 1"/><path d="M11 13l4-10" stroke="#3b6ba5" stroke-width="1.500"/></svg></button>
   <button class="vb" aria-label="打断于点"><svg viewBox="0 0 16 16"><path d="M.500 3.500h15v11H.500z" fill="url(#blue)" stroke="#111"/><path d="M9 2h3v3H9z" fill="#55779a"/></svg></button>
   <button class="vb" aria-label="打断"><svg viewBox="0 0 16 16"><path d="M.500 3.500v11h15v-11" fill="url(#blue)" stroke="#111"/><path d="M2 2h3v3H2zM11 2h3v3h-3z" fill="#55779a"/></svg></button>
   <button class="vb" aria-label="倒角"><svg viewBox="0 0 16 16"><path d="M.500.500v8M.500.500h8" stroke="#111" stroke-dasharray="1 1"/><path d="M8 .500h8M.500 8v8" stroke="#111"/><path d="M.500 10L9 1" fill="none" stroke="#2d62a3" stroke-width="1.500"/></svg></button>
   <button class="vb" aria-label="圆角"><svg viewBox="0 0 16 16"><path d="M.500.500v8M.500.500h8" stroke="#111" stroke-dasharray="1 1"/><path d="M8 .500h8M.500 8v8" stroke="#111"/><path d="M1 11Q2 2 11 1" fill="none" stroke="#2d62a3" stroke-width="2"/></svg></button>
   <button class="vb" aria-label="分解"><svg viewBox="0 0 16 16"><path d="M1 3h3v3H1zM5 5h3v3H5zM1 8h3v3H1zM5 10h3v3H5zM9 8h2v3H9zM2 13h3v3H2z" fill="#d23e25"/><path d="M4 3h2v2H4zM4 7h2v2H4zM8 12h2v2H8zM3 11h2v2H3z" fill="#e5b82c"/><path d="M8 8l4-4" stroke="#a33420" stroke-width="2"/><path d="M12 1l1 6M10 3l6 1M11 1l4 5" stroke="#50749b"/></svg></button>
  </div>
  <div class="vbar second"></div>
  <div class="vbar third"><button class="vb" aria-label="标注样式"><svg viewBox="0 0 16 16"><path d="M15 0L9 6" stroke="#553016" stroke-width="2"/><path d="M10 5l1 2q-2 3-6 3 3-1 5-5z" fill="#201818"/><path d="M.500 9v7M15.500 9v7M2 12.500h12" stroke="#111"/><path d="M1 12.500l4-2v4zM15 12.500l-4-2v4z"/></svg></button></div>
 </aside>
 <section class="view">
  <svg class="canvas" viewBox="80 132 925 505" preserveAspectRatio="xMinYMin meet" role="img" aria-label="图形">
   <g fill="none" stroke="#fff" shape-rendering="crispEdges">
    <g stroke-dasharray="4 3">
     <path d="M292 278A91 91 0 1 1 455 331A28 28 0 0 0 453 368L312 496L317 305A27 27 0 1 0 292 278"/>
    </g>
    <circle cx="482" cy="388" r="27.500"/><circle cx="545" cy="314" r="27.500"/><circle cx="684" cy="269" r="27.500"/><circle cx="839" cy="342" r="27.500"/><circle cx="879" cy="406" r="27.500"/><circle cx="895" cy="488" r="27.500"/>
    <path d="M657 270A91 91 0 1 1 821 320M527 293A111 111 0 0 1 666 291M509 388A52 52 0 0 1 554 340M820 361A64 64 0 0 0 873 380M906 406A104 104 0 0 0 918 472"/>
    <path d="M507 402L677 488L562 336M684 297L677 488L818 361M853 417L677 488M677 487.500H867"/>
    <path d="M90.500 616.500h9v9h-9zM95.500 620V561M95.500 620.500H155M91 572.500h9l-4.500-12zM143.500 616v9l12-4.500z"/>
   </g>
   <g fill="none" stroke="#22e022" stroke-dasharray="7 1" shape-rendering="crispEdges"><path d="M528 292L874 380M528 292L918 472"/></g>
   <g fill="none" stroke="#f01018" shape-rendering="crispEdges">
    <path d="M528 292L454 449M874 380L976 405M918 472L947 487M918 472L845 631M677.500 488V525M894.500 488V525"/>
    <g marker-start="url(#arr)" marker-end="url(#arr)">
     <path d="M457 443L848 624"/><path d="M677 517.500H895"/><path d="M868 484L922 492"/>
     <path d="M970 404A455 455 0 0 1 943 484"/>
     <path d="M582 440A106 106 0 0 1 612 403"/><path d="M633 429A74 74 0 0 1 679 414"/><path d="M680 402A86 86 0 0 1 741 430"/><path d="M782 393A141 141 0 0 1 808 435"/><path d="M789 442A120 120 0 0 1 797 487"/>
    </g>
   </g>
   <g class="dimtext" text-anchor="middle">
    <text transform="translate(591 415) rotate(-52)">26°</text>
    <text transform="translate(652 413) rotate(-14)">39°</text>
    <text transform="translate(716 405) rotate(14)">46°</text>
    <text transform="translate(802 409) rotate(58)">20°</text>
    <text transform="translate(800 464) rotate(80)">22°</text>
    <text x="786" y="514">120</text>
    <text transform="translate(896 484) rotate(6)">Ø30</text>
    <text transform="translate(655 530) rotate(25)">235.9868</text>
    <text transform="translate(952 442) rotate(-73)">10.7353°</text>
   </g>
   <g class="ucs" text-anchor="middle"><text x="97" y="551">Y</text><text x="169" y="626">X</text></g>
   <g fill="#0c40f0" stroke="#5b6fb0"><path d="M286.500 273.500h10v10h-10zM312.500 299.500h10v10h-10zM447.500 327.500h10v10h-10zM448.500 362.500h10v10h-10zM306.500 491.500h10v10h-10z"/></g>
  </svg>
  <div class="tabs">
   <button class="nav" aria-label="第一个"><svg viewBox="0 0 10 10"><path d="M1 1v8" stroke="#000" stroke-width="1.500"/><path d="M8 1v8L3 5z"/></svg></button>
   <button class="nav" aria-label="上一个"><svg viewBox="0 0 10 10"><path d="M7 1v8L2 5z"/></svg></button>
   <button class="nav" aria-label="下一个"><svg viewBox="0 0 10 10"><path d="M3 1v8l5-4z"/></svg></button>
   <button class="nav" aria-label="最后一个"><svg viewBox="0 0 10 10"><path d="M2 1v8l5-4z"/><path d="M9 1v8" stroke="#000" stroke-width="1.500"/></svg></button>
   <button class="tab on"><svg viewBox="0 0 42 15" preserveAspectRatio="none"><path d="M0 0h42l-6 15H6z" fill="#000"/></svg><span>模型</span></button>
   <button class="tab"><svg viewBox="0 0 48 15" preserveAspectRatio="none"><path d="M0 0l5 14.500h36L47 0" fill="#f4f1e6" stroke="#000"/></svg><span>布局<span class="l">1</span></span></button>
   <div class="hscroll"><i class="split"></i><button class="sb" aria-label="向左"><svg><use href="#chev" transform="rotate(90 8 8)"/></svg></button><i class="thumb"></i><button class="sb end" aria-label="向右"><svg><use href="#chev" transform="rotate(-90 8 8)"/></svg></button></div>
  </div>
 </section>
 <div class="vscroll"><button class="sb" aria-label="向上"><svg><use href="#chev" transform="rotate(180 8 8)"/></svg></button><i class="thumb v"></i><button class="sb bottom" aria-label="向下"><svg><use href="#chev"/></svg></button></div>

 <section class="palette" aria-label="特性">
  <div class="palette-in">
   <div class="pbar">
    <button aria-label="关闭特性"><svg viewBox="0 0 16 16"><path d="M2 2l12 12M14 2L2 14" stroke="#fff" stroke-width="2"/></svg></button>
    <h2>特性</h2>
    <button aria-label="自动隐藏"><svg viewBox="0 0 16 16"><path d="M1 2v12" stroke="#fff" stroke-width="1.500"/><path d="M3 8l5-5v10zM10 3l5 5-5 5z" fill="#fff"/></svg></button>
    <button aria-label="特性菜单"><svg viewBox="0 0 16 16"><path d="M0 1h16M1 4h14v11H1z" fill="none" stroke="#fff" stroke-width="1.500"/><path d="M3 4v11" stroke="#fff" stroke-width="3"/><path d="M6 7h7M6 9.500h7M6 12h7" stroke="#fff"/></svg></button>
   </div>
   <div class="pbody">
    <div class="ptop">
     <div class="combo obj"><select aria-label="对象类型"><option>面域</option></select><svg class="arrow"><use href="#chev"/></svg></div>
     <div class="pbtns">
      <button aria-label="快速选择"><svg viewBox="0 0 16 16"><path d="M0 2q6-3 11 0L7 8v6H4V8z" fill="#537cae" stroke="#274a78"/><path d="M14 4l-5 6h3l-3 6 7-8h-3z" fill="#ffda2e" stroke="#93730f" stroke-width=".6"/></svg></button>
      <button aria-label="选择对象"><svg viewBox="0 0 16 16"><path d="M1.500 2.500h10v11h-10z" fill="#fff" stroke="#3c5c8a"/><path d="M5 1l5 5M10 1L5 6" stroke="#c21826" stroke-width="1.500"/><path d="M9 5v9l2-2 2 4 1-1-1-4h3z" fill="#fff" stroke="#222" stroke-width=".8"/></svg></button>
      <button aria-label="切换 PICKADD"><svg viewBox="0 0 16 16"><path d="M.500.500h15v15H.500z" fill="none" stroke="#111" stroke-dasharray="1 1"/><path d="M3.500 3.500h9v9h-9z" fill="#fff" stroke="#5c7ba2" stroke-dasharray="2 1"/><path d="M8 5v6M5 8h6" stroke="#174b8a" stroke-width="2"/></svg></button>
     </div>
    </div>
    <h3><span>基本</span><svg viewBox="0 0 10 10"><path d="M1 5l4-4 4 4M1 9l4-4 4 4" fill="none" stroke="#fff" stroke-width="1.300"/></svg></h3>
    <table>
     <tr><th scope="row">颜色</th><td><i class="swatch"></i>随层</td></tr>
     <tr><th scope="row">图层</th><td class="mono">0</td></tr>
     <tr><th scope="row">线型</th><td><i class="rule"></i>随层</td></tr>
     <tr><th scope="row">线型比例</th><td class="mono">1</td></tr>
     <tr><th scope="row">打印样式</th><td class="ro">随颜色</td></tr>
     <tr><th scope="row">线宽</th><td><i class="rule"></i>随层</td></tr>
     <tr><th scope="row">超链接</th><td></td></tr>
    </table>
    <h3><span>几何图形</span><svg viewBox="0 0 10 10"><path d="M1 5l4-4 4 4M1 9l4-4 4 4" fill="none" stroke="#fff" stroke-width="1.300"/></svg></h3>
    <table>
     <tr><th scope="row">面积</th><td class="mono ro">10108.8491</td></tr>
     <tr><th scope="row">周长</th><td class="mono ro">497.7267</td></tr>
    </table>
    <div class="hint"></div>
   </div>
  </div>
 </section>
</main>

<section class="cmd">
 <i class="cgrip"></i>
 <div class="cbox">
  <div class="hist">
   <div class="lines"><p><span class="pr">命令<span class="c">:</span></span></p><p><span class="pr">命令<span class="c">:</span></span><span class="c">'_.properties</span></p></div>
   <div class="cs"><button class="sb" aria-label="历史向上"><svg><use href="#chev" transform="rotate(180 8 8)"/></svg></button><button class="sb" aria-label="历史向下"><svg><use href="#chev"/></svg></button></div>
  </div>
  <div class="entry"><label for="cmdline" class="pr">命令<span class="c">:</span></label><input id="cmdline" type="text">
   <div class="cs h"><button class="sb" aria-label="命令向左"><svg><use href="#chev" transform="rotate(90 8 8)"/></svg></button><i class="thumb"></i><button class="sb end" aria-label="命令向右"><svg><use href="#chev" transform="rotate(-90 8 8)"/></svg></button></div>
  </div>
 </div>
</section>

<footer class="status">
 <span class="name">英科宇机械<span class="l">CAD</span></span>
 <output class="coords mono">123.6529,&nbsp; 188.1743,&nbsp; 0.0000</output>
 <div class="modes"><button>捕捉</button><button>栅格</button><button>正交</button><button>极轴</button><button class="on">对象捕捉</button><button class="on">对象追踪</button><button>线宽</button><button class="on">模型</button></div>
 <button class="comm" aria-label="通讯中心"><svg viewBox="0 0 20 16"><path d="M2 1q1 8 9 8zM7 7l-5 8h9z" fill="#8fa3bd" stroke="#3d5371"/><path d="M6 5l4-4" stroke="#3d5371"/><path d="M12 5l6 10H6z" fill="#ffe11f" stroke="#6f5c00" stroke-width=".8"/><path d="M12 8v4M12 13v1.500" stroke="#000" stroke-width="1.500"/></svg></button>
 <button class="smenu" aria-label="状态栏菜单"><svg viewBox="0 0 8 4"><path d="M0 0h8L4 4z"/></svg></button>
</footer>

<footer class="taskbar">
 <button class="start"><svg viewBox="0 0 18 18"><path d="M3 3q3-2 6 0L8 9Q5 7 2 8z" fill="#f05a26"/><path d="M10 3q3 2 7 0l-2 6q-3 2-6 0z" fill="#84cf35"/><path d="M2 9q3-1 6 1l-1 6q-3-2-6-1z" fill="#4b94f5"/><path d="M9 10q3 2 6 0l-2 6q-3 1-5 0z" fill="#ffd13b"/></svg><span>开始</span></button>
 <div class="tasks">
  <button class="task"><svg viewBox="0 0 16 16"><path d="M1 2h6l1 2h6v9H1z" fill="#f4ce5c" stroke="#a17216"/><path d="M4 6h5l1 1h5v8H4z" fill="#ffe89a" stroke="#a17216"/><path d="M7 9h5v3H7z" fill="#61a4dc"/></svg><span>新建文件夹</span></button>
  <button class="task"><svg viewBox="0 0 16 16"><path d="M0 0h16v16H0z" fill="#173d8d"/><circle cx="8" cy="8" r="4" fill="none" stroke="#fff" stroke-width="1.500"/><circle cx="8" cy="8" r="1.500" fill="#fff"/><path d="M1 1l4 4M15 1l-4 4M1 15l4-4M15 15l-4-4" stroke="#fff" stroke-width="1.500"/></svg><span><span class="l">H:\</span>常用件小样图<span class="l">...</span></span></button>
  <button class="task on"><svg><use href="#logo"/></svg><span>英科宇<span class="l"> </span>机械工程<span class="l">...</span></span></button>
  <button class="task"><svg viewBox="0 0 16 16"><circle cx="8" cy="8" r="7" fill="#2f72d0" stroke="#d3e6fc" stroke-width="1.500"/><path d="M4.500 11V7q0-1.500 1.700-1.500T8 7v4M8 7q0-1.500 1.700-1.500T11.500 7v4" fill="none" stroke="#fff" stroke-width="1.600"/></svg><span>【进阶级练习题<span class="l">3...</span></span></button>
 </div>
 <div class="lang">
  <button aria-label="输入法"><svg viewBox="0 0 16 16"><path d="M.5 6.500h15v7H.5z" fill="#fff" stroke="#111"/><path d="M2 8.500h12M2 10.500h12M4 12.500h8" stroke="#111" stroke-dasharray="1 1"/><path d="M8 6q0-2 3-2t2-2" fill="none" stroke="#111"/></svg></button>
  <button aria-label="语言帮助"><svg viewBox="0 0 16 16"><path d="M2.500 1.500h12v11h-2v3l-3-3h-7z" fill="#fffce0" stroke="#111"/><path d="M6 5q0-2 2.500-2T11 5q0 1-2.500 2.500V9M8.500 10v1.500" fill="none" stroke="#111" stroke-width="1.500"/></svg></button>
  <button aria-label="语言栏选项"><svg viewBox="0 0 10 18"><path d="M3 2.500h6v3H3zM1 4.500h5v3H1z" fill="#245edb" stroke="#fff"/><path d="M2 14h6l-3 3z" fill="#fff"/></svg></button>
 </div>
 <div class="tray">
  <svg viewBox="0 0 16 16"><path d="M3 8Q2 0 8 0t5 8z" fill="#111"/><circle cx="6.500" cy="4" r="1.200" fill="#fff"/><circle cx="9.500" cy="4" r="1.200" fill="#fff"/><path d="M0 8h16v7H0z" fill="#f6bd27"/><path d="M6 6h4l-2 2z" fill="#f6bd27"/><path d="M1 10h14M1 12h14" stroke="#fff0a0"/></svg>
  <svg viewBox="0 0 16 16"><path d="M14 2Q7 3 8 9L2 8q6 6 12 7-5-3-4-7 0-4 4-6z" fill="#155a91"/><path d="M3 9l7 1" stroke="#58dda0"/></svg>
  <svg viewBox="0 0 16 16"><path d="M.5.5h15v15H.5z" fill="#fff" stroke="#b11"/><path d="M15 2Q6 3 2 9l12 5Q6 10 7 8q2-3 8-6z" fill="#d51c25"/></svg>
  <svg viewBox="0 0 16 16"><path d="M2 3l4-2 5 6-2 6-7-4z" fill="#c2c6cc" stroke="#444"/><circle cx="7" cy="6" r="2.500" fill="#555"/><path d="M11 13q4-2 3-6M9 15q6 0 7-6" fill="none" stroke="#b5cff8"/></svg>
  <svg viewBox="0 0 16 16"><circle cx="8" cy="8" r="7.500" fill="url(#dball)"/></svg>
  <svg viewBox="0 0 16 16"><path d="M8 1l6 2q1 9-6 12Q1 12 2 3z" fill="#d11c25" stroke="#f3b2ac"/><path d="M5.500 5l5 5M10.500 5l-5 5" stroke="#fff" stroke-width="2"/></svg>
  <time class="mono">10:03</time>
 </div>
</footer>
</div>
</body>
</html>
```

FILE: styles.css
```css
* { box-sizing: border-box; }
body { margin: 0; background: #ece9d8; color: #000; font: 12px/16px "Noto Sans CJK SC", sans-serif; overflow: hidden; }
button { margin: 0; padding: 0; border: 0; background: none; font: inherit; color: inherit; display: flex; align-items: center; justify-content: center; flex: none; }
select, input { font: inherit; color: inherit; border: 0; background: none; padding: 0; margin: 0; min-width: 0; outline: 0; }
select { appearance: none; }
h1, h2, h3, p { margin: 0; font-size: inherit; }
svg { display: block; flex: none; }
i { display: block; flex: none; }
.defs { position: absolute; width: 0; height: 0; }
.l, .mono, .combo .mono { font-family: "DejaVu Sans Mono", monospace; font-size: 10px; }
.i16 { width: 16px; height: 16px; }
.app { min-height: 100vh; display: flex; flex-direction: column; }

.titlebar { position: relative; height: 26px; flex: none; display: flex; align-items: center; gap: 4px; padding: 0 2px; background: linear-gradient(#3a95ff 0, #0a62ee 3px, #0053e1 8px, #0060fb 20px, #0064ff 24px, #0044c8 26px); color: #fff; }
.titlebar h1 { font-size: 14px; line-height: 20px; flex: 1; font-weight: 700; text-shadow: 1px 1px #0a2f80; white-space: nowrap; }
.t { font-family: "Liberation Mono", monospace; font-size: 13px; white-space: pre; }
.overlay-chip { position: absolute; top: 0; right: 287px; width: 36px; height: 19px; background: #0452a0; border: 1px solid #062a5c; border-top: 0; }
.overlay-edge { position: absolute; top: 0; right: 48px; width: 184px; height: 2px; background: #2d7edb; border-bottom: 1px solid #0a3fa0; }
.winbtns { display: flex; gap: 3px; }
.winbtns button { width: 21px; height: 21px; border: 1px solid #fff; border-radius: 3px; background: linear-gradient(135deg, #7fa5f5, #2a5fe0 50%, #2450c8); }
.winbtns svg { width: 18px; height: 18px; }
.winbtns .close { background: linear-gradient(135deg, #f0a088, #e0502a 50%, #c83a14); }

.menubar { height: 20px; flex: none; display: flex; align-items: center; gap: 12px; padding: 0 4px 0 5px; white-space: nowrap; }
.menubar .i16 { margin-right: -7px; }
.menubar a { color: #000; text-decoration: none; }
.docbtns { display: flex; gap: 3px; margin-left: auto; }
.docbtns button { width: 16px; height: 16px; background: #f6f4ec; border: 1px solid #fbfaf6; border-right-color: #d9d5c6; border-bottom-color: #d9d5c6; }
.docbtns svg { width: 12px; height: 12px; }

.row { height: 28px; flex: none; display: flex; gap: 2px; }
.bar { display: flex; align-items: center; padding-right: 3px; border: 1px solid #fff; border-left: 0; border-right-color: #b5b1a0; border-bottom-color: #b5b1a0; background: #efecdf; }
.grip { width: 7px; height: 22px; margin: 0 3px 0 2px; border: 2px solid #fff; border-width: 0 2px; box-shadow: 1px 0 #aca899, inset -3px 0 #efecdf, inset 1px 0 #aca899; }
.tb { width: 23px; height: 23px; }
.tb svg { width: 16px; height: 16px; }
.tb.drop { width: 15px; }
.tb.drop svg { width: 6px; }
.sep { width: 6px; height: 20px; border-left: 1px solid #c5c1b0; border-right: 4px solid transparent; background: #fff; background-clip: padding-box; }
.sep.tight { width: 3px; border-right-width: 1px; }
.combo { display: flex; align-items: center; gap: 4px; height: 22px; background: #fff; border: 1px solid #7f9db9; padding: 1px; }
.combo select { flex: 1; height: 18px; line-height: 16px; }
.arrow { width: 15px; height: 18px; padding: 1px 0; background: linear-gradient(#d6e1fc, #b5c9f5); border-radius: 2px; margin-left: auto; }
.layer { width: 299px; }
.layer .state { width: 80px; height: 16px; }
.color { width: 151px; padding-left: 5px; }
.ltype { width: 160px; padding-left: 4px; }
.lweight { width: 125px; padding-left: 4px; }
.pstyle { width: 120px; padding-left: 8px; }
.swatch { width: 10px; height: 10px; border: 1px solid #000; background: #fff; }
.rule { width: 60px; height: 1px; background: #000; }
.lweight .rule { width: 34px; }
.off { background: #efecdf; border-color: #c9c7ba; color: #aca899; }
.off select { color: #aca899; opacity: 1; }
.off .arrow { background: #f0eee5; opacity: .35; }
.solids .grip { margin-right: 24px; }

.work { position: relative; flex: 1; display: flex; min-height: 0; padding-top: 1px; }
.dock { width: 80px; flex: none; display: flex; align-items: flex-start; gap: 1px; border-right: 2px solid #8c897c; border-top: 1px solid #c9c5b4; }
.vbar { width: 25px; border: 1px solid #b5b1a0; border-left-color: #fff; border-top-color: #fff; background: #efecdf; }
.vgrip { height: 6px; margin: 1px 2px; border: solid #c0bcab; border-width: 1px 0; }
.vb { width: 23px; height: 22px; }
.vb svg { width: 16px; height: 16px; }
.second { height: 389px; }
.third { height: 418px; display: flex; align-items: flex-end; padding-bottom: 3px; }
.view { flex: 1; min-width: 0; display: flex; flex-direction: column; border-top: 1px solid #8c897c; }
.canvas { flex: 1; min-height: 0; width: 100%; background: #000; }
.dimtext text { font: 300 13px Roboto, sans-serif; fill: #fff; }
.ucs text { font: 300 15px Lato, sans-serif; fill: #fff; }
.tabs { height: 20px; flex: none; display: flex; align-items: flex-start; background: #ece9d8; border-bottom: 2px solid #fff; }
.nav { width: 18px; height: 16px; border-right: 1px solid #c5c1b0; background: #f4f2e9; }
.nav svg { width: 10px; height: 10px; }
.tab { position: relative; width: 42px; height: 15px; margin-left: 3px; }
.tab svg { position: absolute; inset: 0; width: 100%; height: 100%; }
.tab > span { position: relative; line-height: 14px; }
.tab.on { color: #fff; font-weight: 700; }
.tab + .tab { width: 48px; margin-left: -5px; }
.hscroll { display: flex; align-items: center; gap: 2px; width: 316px; height: 16px; margin-left: auto; background: #f8f7f3; }
.split { width: 5px; height: 14px; border: 1px solid #c5c1b0; background: #ece9d8; border-radius: 2px; }
.sb { width: 15px; height: 15px; border: 1px solid #fff; border-radius: 3px; background: linear-gradient(135deg, #dce7ff, #b4c8f6); box-shadow: inset 0 0 0 1px #b5c7ee; }
.sb svg { width: 16px; height: 16px; margin: -1px; flex: none; }
.thumb { width: 16px; height: 14px; border: 1px solid #a9bdea; border-radius: 2px; background: repeating-linear-gradient(90deg, #8ca9e8 0 1px, #e6eeff 1px 2px) center / 8px 6px no-repeat, #c6d6fb; }
.end { margin-left: auto; }
.vscroll { width: 19px; flex: none; display: flex; flex-direction: column; align-items: center; padding: 1px 2px 21px 1px; background: #f8f7f3; border-right: 2px solid #ece9d8; }
.thumb.v { height: 16px; width: 14px; margin-top: 79px; background: repeating-linear-gradient(#8ca9e8 0 1px, #e6eeff 1px 2px) center / 6px 8px no-repeat, #c6d6fb; }
.bottom { margin-top: auto; }

.palette { position: absolute; left: 30px; top: 3px; width: 215px; height: 392px; background: #707070; clip-path: polygon(0 0, 100% 0, 100% calc(100% - 13px), calc(100% - 13px) 100%, 0 100%); padding: 0 3px 3px 1px; }
.palette-in { height: 100%; display: flex; background: #eee; clip-path: polygon(0 0, 100% 0, 100% calc(100% - 11px), calc(100% - 11px) 100%, 0 100%); }
.pbar { width: 24px; flex: none; background: #0a55e0; display: flex; flex-direction: column; align-items: center; padding: 2px 0 4px; gap: 8px; }
.pbar svg { width: 16px; height: 16px; }
.pbar h2 { margin: auto 0 3px; color: #fff; font-size: 13px; writing-mode: vertical-rl; text-orientation: sideways; transform: rotate(180deg); }
.pbody { flex: 1; display: flex; flex-direction: column; padding: 13px 15px 11px 18px; }
.ptop { display: flex; gap: 5px; margin: 0 0 10px 2px; height: 24px; }
.obj { width: 76px; height: 24px; padding-left: 3px; flex: none; }
.obj select { height: 20px; padding-bottom: 2px; }
.obj .arrow { height: 20px; padding: 2px 0; }
.pbtns { display: flex; border: 1px solid #cdc9ba; flex: 1; }
.pbtns button { flex: 1; border-right: 1px solid #cdc9ba; }
.pbtns button:last-child { border-right: 0; }
.pbtns svg { width: 16px; height: 16px; }
.pbody h3 { height: 16px; flex: none; display: flex; align-items: center; justify-content: space-between; padding: 0 11px 0 6px; background: #cdc5b4; color: #fff; border-radius: 6px 6px 0 0; font-size: 13px; }
.pbody h3 svg { width: 10px; height: 10px; }
.pbody table { margin: 0 0 8px 16px; border-collapse: collapse; table-layout: fixed; width: 139px; }
.pbody tr { height: 16px; }
.pbody th, .pbody td { border: 1px solid #cbc8b8; padding: 0 0 1px 3px; height: 16px; line-height: 14px; font-weight: 400; text-align: left; white-space: nowrap; }
.pbody th { width: 54px; }
.pbody td { background: #fff; padding-left: 1px; }
.pbody td.ro { background: #eee; }
.pbody td .swatch { display: inline-block; vertical-align: -1px; margin: 0 5px 0 2px; }
.pbody td .rule { display: inline-block; width: 31px; vertical-align: 4px; margin: 0 5px 0 4px; }
.hint { margin: auto 0 0 1px; height: 31px; border: 1px solid #c9c7b6; }

.cmd { height: 59px; flex: none; display: flex; padding: 7px 8px 3px 5px; border-top: 1px solid #fff; border-bottom: 2px solid #aca899; background: linear-gradient(#000, #000) 0 1px / 100% 1px no-repeat; }
.cgrip { width: 8px; border: 1px solid #c5c1b0; border-width: 0 1px; margin-right: 4px; box-shadow: inset 2px 0 #fff, inset -2px 0 #fff; }
.cbox { flex: 1; display: flex; flex-direction: column; background: #fff; border-left: 1px solid #000; border-top: 1px solid #000; }
.hist { flex: 1; display: flex; justify-content: space-between; border-bottom: 1px solid #aca899; }
.lines { padding: 0 1px; }
.lines p { display: flex; align-items: center; height: 14px; line-height: 14px; }
.c { font-family: "Liberation Mono", monospace; font-size: 13px; }
.pr { font-size: 13px; width: 50px; flex: none; display: flex; gap: 4px; line-height: 14px; }
.cs { display: flex; flex-direction: column; align-items: center; }
.entry { height: 16px; display: flex; align-items: center; padding-left: 1px; }
.entry input { flex: 1; height: 14px; }
.cs.h { flex-direction: row; width: 84px; gap: 2px; padding-right: 17px; background: linear-gradient(#ece9d8, #ece9d8) right / 16px 100% no-repeat; }

.status { height: 22px; flex: none; display: flex; align-items: center; padding: 0 3px 0 7px; background: #ece9d8; white-space: nowrap; }
.name { width: 84px; flex: none; }
.coords { width: 250px; height: 19px; line-height: 18px; padding-left: 1px; border: 1px solid #aca899; border-right-color: #fff; border-bottom-color: #fff; }
.modes { display: flex; gap: 4px; margin-left: 5px; flex: 1; }
.modes button { height: 19px; padding: 0 1px; border: 1px solid #fff; border-right-color: #aca899; border-bottom-color: #aca899; }
.modes .on { border-color: #000 #fff #fff #000; background: #f4f2e9; }
.comm { width: 23px; height: 19px; border: 1px solid #aca899; border-right-color: #fff; border-bottom-color: #fff; }
.comm svg { width: 20px; height: 16px; }
.smenu { width: 14px; padding: 7px 0 0 6px; }
.smenu svg { width: 8px; height: 4px; }

.taskbar { height: 29px; flex: none; display: flex; color: #fff; white-space: nowrap; background: linear-gradient(#3a80f0 0, #2560de 4px, #245edb 24px, #1c48b0 29px); }
.start { width: 97px; gap: 6px; border-radius: 0 10px 10px 0; background: linear-gradient(#5eb35a 0, #3a963a 5px, #379438 22px, #2a7230 29px); font-size: 18px; font-style: italic; text-shadow: 1px 1px 1px #1b4a1b; box-shadow: inset -3px 0 3px #2a7230; padding-right: 10px; }
.start svg { width: 20px; height: 20px; }
.tasks { display: flex; flex: 0 1 616px; min-width: 0; gap: 2px; padding: 2px 0 2px 9px; }
.task { flex: 1 1 0; min-width: 0; justify-content: flex-start; gap: 3px; padding-left: 9px; border-radius: 3px; background: linear-gradient(#5a9bff 0, #3c81f3 4px, #3a7df0 22px, #2f6ad8); overflow: hidden; }
.task svg { width: 16px; height: 16px; }
.task.on { background: #1e50b8; box-shadow: inset 1px 1px 2px #0f3380; }
.lang { display: flex; gap: 6px; padding-left: 9px; flex: 1; }
.lang svg { width: 16px; height: 16px; }
.lang button:last-child svg { width: 10px; height: 18px; margin-left: 4px; }
.tray { width: 166px; flex: none; display: flex; align-items: center; gap: 2px; padding-left: 9px; border-left: 1px solid #0d3f9c; background: linear-gradient(#3fb8ff 0, #1290e8 4px, #129af0 22px, #0f78d0 29px); }
.tray svg { width: 16px; height: 16px; }
.tray time { margin-left: 6px; }
```
